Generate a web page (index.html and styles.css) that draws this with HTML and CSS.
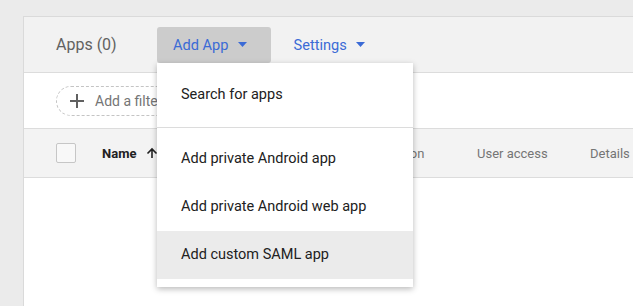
FILE: index.html
```html
<!DOCTYPE html>
<html lang="en">
<head>
    <meta charset="UTF-8">
    <meta name="viewport" content="width=device-width, initial-scale=1.0">
    <title>Apps</title>
    <link rel="stylesheet" href="styles.css">
</head>
<body>
    <div class="card">
        <!-- header with actions -->
        <div class="card-header">
            <span class="title">Apps (0)</span>
            <div class="menu-wrap">
                <button class="action active">Add App
                    <svg class="caret" width="9" height="5" viewBox="0 0 9 5"><path d="M0 0h9L4.5 5z"/></svg>
                </button>
                <div class="menu">
                    <div class="menu-item">Search for apps</div>
                    <div class="menu-divider"></div>
                    <div class="menu-item">Add private Android app</div>
                    <div class="menu-item">Add private Android web app</div>
                    <div class="menu-item hover">Add custom SAML app</div>
                </div>
            </div>
            <button class="action">Settings
                <svg class="caret" width="9" height="5" viewBox="0 0 9 5"><path d="M0 0h9L4.5 5z"/></svg>
            </button>
        </div>

        <div class="filter-row">
            <div class="filter-chip">
                <svg width="14" height="14" viewBox="0 0 14 14"><path d="M7 0v14M0 7h14" stroke="#616161" stroke-width="2"/></svg>
                <span>Add a filter</span>
            </div>
        </div>

        <div class="table-head">
            <span class="checkbox"></span>
            <span class="col-name">Name
                <svg width="12" height="12" viewBox="0 0 12 12"><path d="M6 11V2M1.5 6.5L6 2l4.5 4.5" fill="none" stroke="#212121" stroke-width="1.6"/></svg>
            </span>
            <span class="col">Authentication</span>
            <span class="col">User access</span>
            <span class="col">Details</span>
        </div>

        <div class="table-body"></div>
    </div>
</body>
</html>
```

FILE: styles.css
```css
html, body {
    height: 306px;
    overflow: hidden;
}
body {
    margin: 0;
    padding: 16px 0 0 23px;
    box-sizing: border-box;
    background-color: #ebebeb;
    font-family: Roboto, "Liberation Sans", Arial, sans-serif;
}
.card {
    width: 610px;
    height: 290px;
    box-sizing: border-box;
    background-color: #ffffff;
    border: 1px solid #dadada;
    border-right: none;
    border-bottom: none;
}
.card-header {
    display: flex;
    align-items: center;
    height: 55px;
    padding-left: 32px;
    background-color: #f2f2f2;
    border-bottom: 1px solid #dcdcdc;
}
.title {
    font-size: 16px;
    color: #616161;
    width: 101px;
}
.menu-wrap {
    position: relative;
    margin-right: 7px;
}
.action {
    display: flex;
    align-items: center;
    height: 36px;
    padding: 0 24px 0 16px;
    border: none;
    border-radius: 3px;
    background: transparent;
    color: #3b6bd6;
    font-family: inherit;
    font-size: 14.6px;
    cursor: pointer;
}
.action.active {
    background-color: #cccccc;
}
.caret {
    margin-left: 9px;
    fill: #3b6bd6;
}
.menu {
    position: absolute;
    top: 36px;
    left: 0;
    width: 256px;
    padding: 8px 0;
    background-color: #ffffff;
    box-shadow: 0 2px 6px rgba(0, 0, 0, 0.28);
    z-index: 2;
}
.menu-item {
    height: 48px;
    line-height: 48px;
    padding-left: 24px;
    font-size: 14.5px;
    color: #212121;
}
.menu-item.hover {
    background-color: #ebebeb;
}
.menu-divider {
    height: 1px;
    margin: 8px 0 7px;
    background-color: #dcdcdc;
}
.filter-row {
    display: flex;
    align-items: center;
    height: 55px;
    padding-left: 32px;
    border-bottom: 1px solid #dcdcdc;
}
.filter-chip {
    display: flex;
    align-items: center;
    gap: 11px;
    height: 28px;
    padding: 0 16px 0 13px;
    border: 1px dashed #c4c4c4;
    border-radius: 16px;
    font-size: 14px;
    color: #757575;
}
.table-head {
    display: grid;
    grid-template-columns: 46px 238px 137px 113px auto;
    align-items: center;
    height: 48px;
    padding-left: 32px;
    background-color: #f3f3f3;
    border-bottom: 1px solid #dcdcdc;
    font-size: 13px;
    color: #757575;
}
.checkbox {
    width: 18px;
    height: 18px;
    border: 1px solid #c6c6c6;
    border-radius: 2px;
    background-color: #f8f8f8;
}
.col-name {
    display: flex;
    align-items: center;
    gap: 10px;
    font-weight: bold;
    color: #212121;
}
```
